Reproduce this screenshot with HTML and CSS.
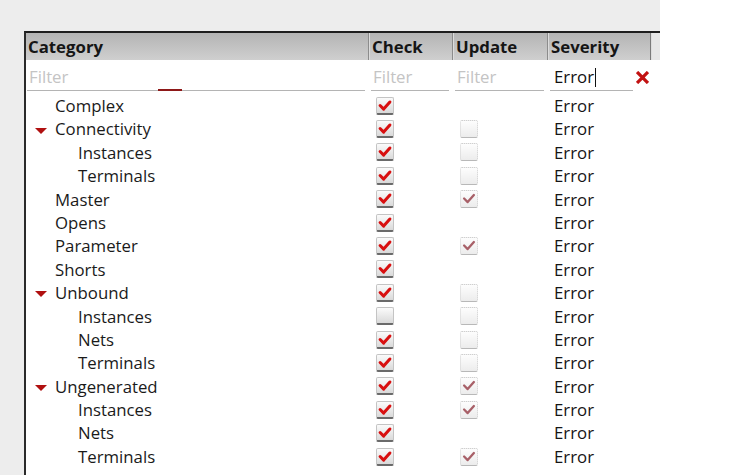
FILE: index.html
```html
<!DOCTYPE html>
<html>
<head>
<meta charset="utf-8">
<link rel="stylesheet" href="styles.css">
</head>
<body>
<div class="page">
  <div class="table">
    <div class="hdr">
      <div class="hc first">Category</div>
      <div class="hc">Check</div>
      <div class="hc">Update</div>
      <div class="hc">Severity</div>
      <div class="hc tail"></div>
    </div>
    <div class="filters">
      <div class="fc"><span class="ph">Filter</span><span class="ul"><span class="mark"></span></span></div>
      <div class="fc"><span class="ph">Filter</span><span class="ul"></span></div>
      <div class="fc"><span class="ph">Filter</span><span class="ul"></span></div>
      <div class="fc sev"><span class="val">Error<span class="caret"></span></span><svg class="clear" viewBox="0 0 12 12"><path d="M2 2 L10 10 M10 2 L2 10"/></svg><span class="ul short"></span></div>
      <div></div>
    </div>
    <div class="rows" id="rows"></div>
  </div>
</div>
<script src="app.js"></script>
</body>
</html>
```

FILE: app.js
```js
const data = [
  ["Complex", 0, false, 1, null],
  ["Connectivity", 0, true, 1, 0],
  ["Instances", 1, false, 1, 0],
  ["Terminals", 1, false, 1, 0],
  ["Master", 0, false, 1, 1],
  ["Opens", 0, false, 1, null],
  ["Parameter", 0, false, 1, 1],
  ["Shorts", 0, false, 1, null],
  ["Unbound", 0, true, 1, 0],
  ["Instances", 1, false, 0, 0],
  ["Nets", 1, false, 1, 0],
  ["Terminals", 1, false, 1, 0],
  ["Ungenerated", 0, true, 1, 1],
  ["Instances", 1, false, 1, 1],
  ["Nets", 1, false, 1, null],
  ["Terminals", 1, false, 1, 1]
];
const tick = '<svg viewBox="0 0 18 18" class="tk"><path d="M3.5 8.5 L7.5 12.5 L14.5 4.5" /></svg>';
const rows = document.getElementById('rows');
rows.innerHTML = data.map(([name, lvl, exp, chk, upd]) => {
  const arrow = exp ? '<span class="arrow"></span>' : '<span class="noarrow"></span>';
  const c1 = '<span class="cb' + (chk ? ' on' : '') + '">' + (chk ? tick : '') + '</span>';
  const c2 = upd === null ? '' : '<span class="cb dis' + (upd ? ' on' : '') + '">' + (upd ? tick : '') + '</span>';
  return '<div class="row"><div class="cat lvl' + lvl + '">' + arrow + '<span>' + name + '</span></div>' +
    '<div class="chk">' + c1 + '</div><div class="upd">' + c2 + '</div><div class="sev">Error</div><div></div></div>';
}).join('');
```

FILE: styles.css
```css
html, body { margin: 0; padding: 0; background: #ffffff; }
body { font-family: "Open Sans", "DejaVu Sans", sans-serif; color: #1a1a1a; }
.page {
  width: 660px;
  height: 475px;
  box-sizing: border-box;
  padding: 31px 0 0 24px;
  background: #ededed;
  overflow: hidden;
}
.table {
  background: #ffffff;
  border-left: 2px solid #2a2a2a;
  border-top: 2px solid #1e1e1e;
  height: 100%;
}
.hdr, .filters, .row {
  display: grid;
  grid-template-columns: 342px 84px 95px 103px 10px;
}
.hdr { height: 27px; }
.hc {
  background: linear-gradient(#b4b4b4, #cfcfcf);
  border-left: 1px solid #8c8c8c;
  box-shadow: inset 1px 0 0 #dcdcdc;
  font-weight: 700;
  font-size: 16.8px;
  line-height: 27px;
  padding-left: 3px;
  color: #151515;
  white-space: nowrap;
}
.hc.first { border-left: 0; box-shadow: none; padding-left: 2px; }
.hc.tail { background: #e6e6e6; padding: 0; border-left: 1px solid #7a7a7a; }
.filters { height: 32px; }
.fc {
  position: relative;
  font-size: 16.8px;
  line-height: 34px;
  height: 32px;
  padding-left: 5px;
}
.fc:first-child { padding-left: 3px; }
.ph { color: #c4c4c4; }
.ul {
  position: absolute;
  left: 3px; right: 3px; bottom: 1px;
  height: 1px;
  background: #b4b4b4;
}
.fc:first-child .ul { left: 1px; }
.ul.short { right: 17px; }
.mark {
  position: absolute;
  left: 131px; width: 24px; top: -1px; height: 2px;
  background: #8e1818;
}
.sev .val { color: #111; }
.caret { display: inline-block; width: 1px; height: 19px; background: #111; vertical-align: -4px; margin-left: 1px; }
.clear {
  position: absolute;
  right: 1px; top: 11px;
  width: 13px; height: 13px;
}
.clear path { stroke: #c21212; stroke-width: 3; fill: none; stroke-linecap: square; }
.rows { padding-top: 2px; }
.row { height: 23.4px; font-size: 16.8px; line-height: 23.4px; }
.cat { display: flex; align-items: center; white-space: nowrap; }
.lvl0 { padding-left: 9px; }
.lvl1 { padding-left: 32px; }
.arrow, .noarrow { width: 12px; margin-right: 8px; flex: none; }
.arrow {
  height: 0;
  border-left: 6px solid transparent;
  border-right: 6px solid transparent;
  border-top: 6px solid #b01010;
  width: 0;
  margin-right: 8px;
  margin-top: 3px;
}
.chk { padding-left: 8px; display: flex; align-items: center; }
.upd { padding-left: 8px; display: flex; align-items: center; }
.sev { padding-left: 7px; color: #151515; }
.cb {
  width: 18px; height: 18px;
  box-sizing: border-box;
  border-radius: 2px;
  background: linear-gradient(#fbfbfb, #d9d9d9);
  border: 1px solid #c4c4c4;
  border-bottom: 2px solid #6a6a6a;
  display: inline-block;
  position: relative;
}
.cb.dis {
  background: linear-gradient(#fdfdfd, #ececec);
  border: 1px dotted #cfcfcf;
  border-bottom: 1px solid #b8b8b8;
}
.tk { position: absolute; left: 0; top: 0; width: 16px; height: 16px; }
.tk path { fill: none; stroke: #d80f0f; stroke-width: 3.4; stroke-linecap: round; stroke-linejoin: round; }
.cb.dis .tk path { stroke: #a86068; stroke-width: 2.6; }
```
